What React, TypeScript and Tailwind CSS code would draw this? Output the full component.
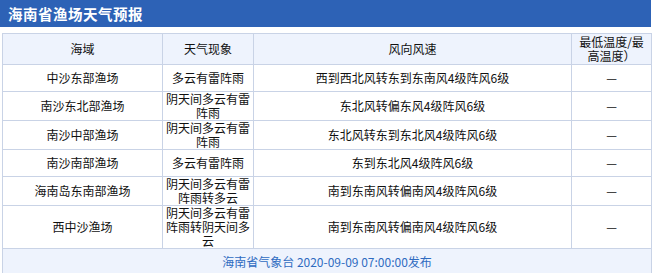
const rows = [
  { area: "中沙东部渔场", weather: "多云有雷阵雨", wind: "西到西北风转东到东南风4级阵风6级", temp: "—", h: "h-[27px]" },
  { area: "南沙东北部渔场", weather: "阴天间多云有雷阵雨", wind: "东北风转偏东风4级阵风6级", temp: "—", h: "h-[28px]" },
  { area: "南沙中部渔场", weather: "阴天间多云有雷阵雨", wind: "东北风转东到东北风4级阵风6级", temp: "—", h: "h-[29px]" },
  { area: "南沙南部渔场", weather: "多云有雷阵雨", wind: "东到东北风4级阵风6级", temp: "—", h: "h-[27px]" },
  { area: "海南岛东南部渔场", weather: "阴天间多云有雷阵雨转多云", wind: "南到东南风转偏南风4级阵风6级", temp: "—", h: "h-[28px]" },
  { area: "西中沙渔场", weather: "阴天间多云有雷阵雨转阴天间多云", wind: "南到东南风转偏南风4级阵风6级", temp: "—", h: "h-[43px]" },
];

const cell = "border border-[#c9d3e6] text-center align-middle px-[3px] py-0 leading-[14px]";

export default function App() {
  return (
    <div className="w-[653px] h-[273px] bg-white font-['Noto_Sans_CJK_SC',sans-serif] text-[12px] text-[#111]">
      <div className="w-[651px] h-[27px] bg-[#2d62b6] flex items-center pl-[8px]">
        <h3 className="text-white font-bold text-[14.5px] tracking-[0.5px]">海南省渔场天气预报</h3>
      </div>

      <table className="mt-[6px] ml-[2px] w-[649px] table-fixed border-collapse">
        <colgroup>
          <col className="w-[160px]" />
          <col className="w-[91px]" />
          <col className="w-[318px]" />
          <col className="w-[80px]" />
        </colgroup>
        <thead>
          <tr className="h-[31px] bg-[#eef3fd]">
            <th className={`${cell} font-normal`}>海域</th>
            <th className={`${cell} font-normal`}>天气现象</th>
            <th className={`${cell} font-normal`}>风向风速</th>
            <th className={`${cell} font-normal`}>最低温度/最高温度）</th>
          </tr>
        </thead>
        <tbody>
          {rows.map((row) => (
            <tr key={row.area} className={row.h}>
              <td className={cell}>{row.area}</td>
              <td className={cell}>{row.weather}</td>
              <td className={cell}>{row.wind}</td>
              <td className={cell}>{row.temp}</td>
            </tr>
          ))}
          <tr className="h-[26px] bg-[#eef3fd]">
            <td colSpan={4} className={`${cell} text-[#2f6bc1]`}>
              海南省气象台 2020-09-09 07:00:00发布
            </td>
          </tr>
        </tbody>
      </table>
    </div>
  );
}
